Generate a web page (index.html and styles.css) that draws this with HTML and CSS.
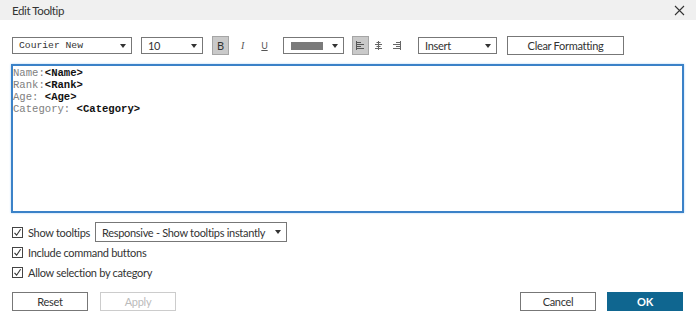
FILE: index.html
```html
<!DOCTYPE html>
<html>
<head>
<meta charset="utf-8">
<link rel="stylesheet" href="styles.css">
</head>
<body>
<div class="dialog">
  <div class="titlebar">
    <span class="title">Edit Tooltip</span>
    <svg class="close" width="11" height="11" viewBox="0 0 11 11"><path d="M1 1 L10 10 M10 1 L1 10" stroke="#333" stroke-width="1.1" fill="none"/></svg>
  </div>
  <div class="toolbar">
    <div class="select font-select"><span class="mono">Courier New</span><span class="arrow"></span></div>
    <div class="select size-select"><span>10</span><span class="arrow"></span></div>
    <div class="tbtn active bold-btn"><span class="b">B</span></div>
    <div class="tbtn"><span class="i">I</span></div>
    <div class="tbtn"><span class="u">U</span></div>
    <div class="select color-select"><span class="swatch"></span><span class="arrow"></span></div>
    <div class="tbtn active align first-align">
      <svg width="9" height="9" viewBox="0 0 9 9"><path d="M1 1.5h4M1 3.5h7M1 5.5h4M1 7.5h7" stroke="#555" stroke-width="1"/><path d="M0.5 0v9" stroke="#555"/></svg>
    </div>
    <div class="tbtn align">
      <svg width="9" height="9" viewBox="0 0 9 9"><path d="M2.5 1.5h4M1 3.5h7M2.5 5.5h4M1 7.5h7" stroke="#666" stroke-width="1"/><path d="M4.5 0v9" stroke="#666"/></svg>
    </div>
    <div class="tbtn align">
      <svg width="9" height="9" viewBox="0 0 9 9"><path d="M4 1.5h4M1 3.5h7M4 5.5h4M1 7.5h7" stroke="#666" stroke-width="1"/><path d="M8.5 0v9" stroke="#666"/></svg>
    </div>
    <div class="select insert-select"><span>Insert</span><span class="arrow"></span></div>
    <div class="button clear">Clear Formatting</div>
  </div>
  <div class="editor">
    <div class="line"><span class="lbl">Name:</span><b>&lt;Name&gt;</b></div>
    <div class="line"><span class="lbl">Rank:</span><b>&lt;Rank&gt;</b></div>
    <div class="line"><span class="lbl">Age: </span><b>&lt;Age&gt;</b></div>
    <div class="line"><span class="lbl">Category: </span><b>&lt;Category&gt;</b></div>
  </div>
  <div class="options">
    <div class="opt first">
      <span class="check"><svg width="9" height="9" viewBox="0 0 9 9"><path d="M1.5 4.8 L3.6 7.2 L7.6 1.2" stroke="#333" stroke-width="1.1" fill="none"/></svg></span>
      <span class="olabel">Show tooltips</span>
      <div class="select resp-select"><span>Responsive - Show tooltips instantly</span><span class="arrow"></span></div>
    </div>
    <div class="opt">
      <span class="check"><svg width="9" height="9" viewBox="0 0 9 9"><path d="M1.5 4.8 L3.6 7.2 L7.6 1.2" stroke="#333" stroke-width="1.1" fill="none"/></svg></span>
      <span class="olabel">Include command buttons</span>
    </div>
    <div class="opt">
      <span class="check"><svg width="9" height="9" viewBox="0 0 9 9"><path d="M1.5 4.8 L3.6 7.2 L7.6 1.2" stroke="#333" stroke-width="1.1" fill="none"/></svg></span>
      <span class="olabel">Allow selection by category</span>
    </div>
  </div>
  <div class="footer">
    <div class="left">
      <div class="button fbtn">Reset</div>
      <div class="button fbtn disabled">Apply</div>
    </div>
    <div class="right">
      <div class="button fbtn">Cancel</div>
      <div class="button fbtn primary">OK</div>
    </div>
  </div>
</div>
</body>
</html>
```

FILE: styles.css
```css
* { box-sizing: border-box; }
html, body { margin: 0; padding: 0; background: #fff; }
body {
  font-family: "Lato", "Noto Sans", sans-serif;
  font-size: 11px;
  letter-spacing: -0.3px;
  color: #333;
  width: 696px;
  height: 319px;
  overflow: hidden;
}
.titlebar {
  height: 20px;
  background: #f0f0f0;
  display: flex;
  align-items: center;
  justify-content: space-between;
  padding: 0 11px 0 12px;
}
.title { font-size: 11.5px; letter-spacing: -0.4px; color: #333; }
.close { display: block; }
.toolbar {
  display: flex;
  align-items: center;
  height: 19px;
  margin-top: 16px;
  padding-left: 12px;
}
.toolbar > * { flex-shrink: 0; }
.select {
  height: 17px;
  border: 1px solid #777;
  display: flex;
  align-items: center;
  justify-content: space-between;
  padding: 0 5px 0 6px;
  background: #fff;
  flex-shrink: 0;
}
.arrow {
  width: 0; height: 0;
  border-left: 3px solid transparent;
  border-right: 3px solid transparent;
  border-top: 4px solid #333;
}
.mono { font-family: "Liberation Mono", monospace; font-size: 9.7px; letter-spacing: 0; color: #333; }
.font-select { width: 120px; }
.size-select { width: 62px; margin-left: 9px; }
.tbtn {
  width: 17px; height: 19px;
  display: flex; align-items: center; justify-content: center;
  border: 1px solid transparent;
  margin-left: 5px;
}
.tbtn.bold-btn { margin-left: 9px; }
.tbtn.active { background: #c9c9c9; border-color: #a5a5a5; }
.b { font-size: 11px; color: #333; }
.i { font-family: "Liberation Serif", serif; font-size: 10px; font-style: italic; color: #555; }
.u { font-size: 9px; text-decoration: underline; color: #555; }
.color-select { width: 61px; margin-left: 10px; padding-left: 7px; }
.swatch { width: 32px; height: 8px; background: #7a7a7a; }
.align { margin-left: 1px; }
.tbtn.first-align { margin-left: 8px; }
.insert-select { width: 79px; margin-left: 13px; }
.button {
  height: 19px;
  border: 1px solid #777;
  display: flex; align-items: center; justify-content: center;
  background: #fff;
  flex-shrink: 0;
}
.clear { width: 117px; margin-left: 10px; }
.editor {
  margin: 9px 12px 0 11px;
  height: 149px;
  border: 2px solid #3b82c8;
  box-shadow: 0 0 2px #a8d0f5;
  padding: 1px 0 0 0;
  font-family: "Liberation Mono", monospace;
  font-size: 10.6px;
  letter-spacing: 0;
  line-height: 12px;
}
.lbl { color: #808080; }
.line b { color: #111; }
.options { margin-top: 9px; padding-left: 12px; }
.opt { display: flex; align-items: center; height: 20px; }
.check {
  width: 11px; height: 11px;
  border: 1px solid #444;
  display: flex; align-items: center; justify-content: center;
  margin-right: 5px;
  flex-shrink: 0;
}
.check svg { display: block; }
.resp-select { width: 192px; height: 20px; margin-left: 5px; white-space: nowrap; }
.footer {
  display: flex;
  justify-content: space-between;
  padding: 0 13px 0 12px;
  margin-top: 10px;
}
.left, .right { display: flex; }
.fbtn { width: 76px; height: 19px; }
.left .fbtn + .fbtn { margin-left: 12px; }
.right .fbtn + .fbtn { margin-left: 11px; }
.fbtn.disabled { color: #bbb; border-color: #ccc; }
.fbtn.primary { background: #0f6690; border-color: #0f6690; color: #fff; font-weight: bold; }
```
